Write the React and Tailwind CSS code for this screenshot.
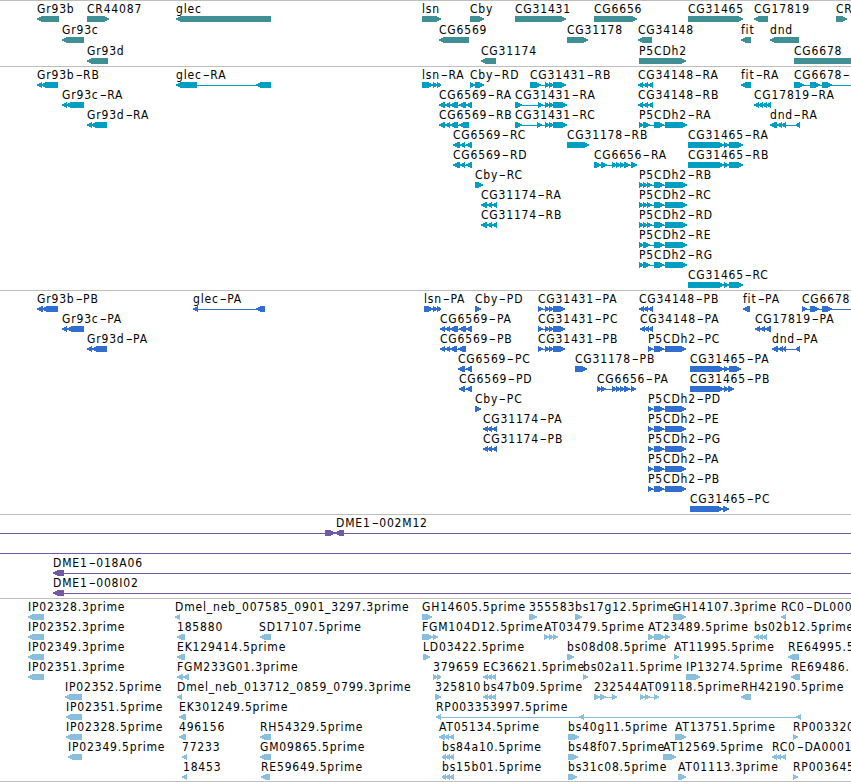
const L = "left";
const R = "right";

// feature: [name, direction, [start, end, start, end, ...], options]
const exons3148 = [638, 643, 643, 648, 648, 653];
const p5Short = [639, 644, 643, 650, 654, 664, 665, 687];
const p5Long = [639, 643, 643, 647, 647, 652, 654, 664, 665, 687];
const p5Protein = [648, 653, 654, 664, 665, 686];
const cg31465 = [688, 724, 724, 729, 729, 743];
const cg31431p = [538, 543, 545, 549, 549, 553, 553, 565];
const cg31174r = [481, 487, 487, 492, 492, 497];
const cg31174p = [483, 488, 488, 492, 492, 497];

const genes = [
    [
        ["Gr93b", L, [37, 59]],
        ["CR44087", R, [87, 109]],
        ["glec", L, [176, 271]],
        ["lsn", R, [422, 441]],
        ["Cby", R, [470, 484]],
        ["CG31431", R, [515, 566]],
        ["CG6656", R, [594, 637]],
        ["CG31465", R, [688, 743]],
        ["CG17819", L, [754, 768]],
        ["CR", R, [836, 847]],
    ],
    [
        ["Gr93c", L, [62, 84]],
        ["CG6569", L, [439, 469]],
        ["CG31178", R, [567, 588]],
        ["CG34148", L, [638, 652]],
        ["fit", L, [741, 751]],
        ["dnd", L, [770, 799]],
    ],
    [
        ["Gr93d", L, [87, 108]],
        ["CG31174", L, [481, 496]],
        ["P5CDh2", R, [639, 686]],
        ["CG6678", R, [794, 870]],
    ],
];

const transcripts = [
    [
        ["Gr93b-RB", L, [37, 42, 41, 58]],
        ["glec-RA", L, [176, 197, 256, 271]],
        ["lsn-RA", R, [422, 433, 433, 437, 437, 441]],
        ["Cby-RD", R, [470, 475, 475, 484]],
        ["CG31431-RB", R, [530, 541, 545, 549, 549, 553, 553, 566]],
        ["CG34148-RA", L, exons3148],
        ["fit-RA", L, [741, 751]],
        ["CG6678-", R, [794, 804, 810, 820, 822, 832], { line: [794, 851] }],
    ],
    [
        ["Gr93c-RA", L, [62, 67, 66, 84]],
        ["CG6569-RA", L, [439, 445, 445, 450, 450, 458, 459, 466, 466, 472]],
        ["CG31431-RA", R, [515, 522, 538, 543, 545, 549, 549, 553, 553, 567]],
        ["CG34148-RB", L, exons3148],
        ["CG17819-RA", L, [754, 759, 759, 763, 763, 767, 766, 771]],
    ],
    [
        ["Gr93d-RA", L, [87, 92, 91, 107]],
        ["CG6569-RB", L, [439, 445, 445, 450, 450, 458, 459, 469]],
        ["CG31431-RC", R, [515, 522, 537, 542, 545, 549, 549, 553, 553, 567]],
        ["P5CDh2-RA", R, p5Short],
        ["dnd-RA", L, [770, 777, 777, 782, 782, 786, 796, 800]],
    ],
    [
        ["CG6569-RC", L, [453, 460, 460, 465, 466, 472]],
        ["CG31178-RB", R, [567, 589]],
        ["CG31465-RA", R, cg31465],
    ],
    [
        ["CG6569-RD", L, [453, 460, 460, 465, 466, 472]],
        ["CG6656-RA", R, [594, 601, 601, 607, 612, 616, 616, 620, 620, 624, 624, 630, 631, 637]],
        ["CG31465-RB", R, cg31465],
    ],
    [["Cby-RC", R, [475, 483]], ["P5CDh2-RB", R, p5Long]],
    [["CG31174-RA", L, cg31174r], ["P5CDh2-RC", R, p5Long]],
    [["CG31174-RB", L, cg31174r], ["P5CDh2-RD", R, p5Long]],
    [["P5CDh2-RE", R, p5Short]],
    [["P5CDh2-RG", R, p5Short]],
    [["CG31465-RC", R, cg31465]],
];

const proteins = [
    [
        ["Gr93b-PB", L, [37, 43, 42, 58]],
        ["glec-PA", L, [193, 198, 256, 265]],
        ["lsn-PA", R, [424, 433, 433, 437, 437, 441]],
        ["Cby-PD", R, [475, 481]],
        ["CG31431-PA", R, cg31431p],
        ["CG34148-PB", L, [639, 644, 644, 648, 648, 653]],
        ["fit-PA", L, [743, 750]],
        ["CG6678", R, [802, 807, 810, 819, 822, 832], { line: [802, 851] }],
    ],
    [
        ["Gr93c-PA", L, [62, 67, 67, 84]],
        ["CG6569-PA", L, [440, 445, 445, 450, 450, 458, 459, 466, 466, 472]],
        ["CG31431-PC", R, cg31431p],
        ["CG34148-PA", L, [640, 645, 645, 649, 649, 653]],
        ["CG17819-PA", L, [755, 760, 760, 765, 765, 771]],
    ],
    [
        ["Gr93d-PA", L, [87, 92, 92, 107]],
        ["CG6569-PB", L, [440, 445, 445, 450, 450, 457, 458, 466]],
        ["CG31431-PB", R, cg31431p],
        ["P5CDh2-PC", R, p5Protein],
        ["dnd-PA", L, [772, 778, 778, 783, 783, 786, 796, 800]],
    ],
    [
        ["CG6569-PC", L, [458, 465, 466, 472]],
        ["CG31178-PB", R, [575, 587]],
        ["CG31465-PA", R, [690, 724, 724, 729, 729, 741]],
    ],
    [
        ["CG6569-PD", L, [459, 465, 466, 472]],
        ["CG6656-PA", R, [597, 601, 601, 606, 612, 616, 616, 620, 620, 624, 624, 630, 631, 636]],
        ["CG31465-PB", R, [690, 724, 724, 728, 728, 734]],
    ],
    [["Cby-PC", R, [475, 481]], ["P5CDh2-PD", R, p5Protein]],
    [["CG31174-PA", L, cg31174p], ["P5CDh2-PE", R, p5Protein]],
    [["CG31174-PB", L, cg31174p], ["P5CDh2-PG", R, p5Protein]],
    [["P5CDh2-PA", R, p5Protein]],
    [["P5CDh2-PB", R, p5Protein]],
    [["CG31465-PC", R, [690, 723, 723, 729]]],
];

const clones = [
    [
        ["", R, [325, 335], { line: [0, 335] }],
        ["DME1-002M12", L, [335, 344], { line: [336, 851], labelX: 336 }],
    ],
    [["", R, [], { line: [0, 851] }]],
    [["DME1-018A06", L, [53, 64], { line: [53, 851] }]],
    [["DME1-008I02", L, [53, 64], { line: [53, 851] }]],
];

const ests = [
    [
        ["IP02328.3prime", L, [28, 44]],
        ["Dmel_neb_007585_0901_3297.3prime", L, [175, 180]],
        ["GH14605.5prime", R, [422, 432]],
        ["355583", R, [529, 537]],
        ["bs17g12.5prime", R, [575, 582]],
        ["GH14107.3prime", R, [673, 686]],
        ["RC0-DL000", L, [781, 786]],
    ],
    [
        ["IP02352.3prime", L, [28, 44]],
        ["185880", L, [177, 185]],
        ["SD17107.5prime", L, [260, 271], { labelX: 259 }],
        ["FGM104D12.5prime", R, [422, 433, 433, 438]],
        ["AT03479.5prime", R, [544, 549, 549, 553, 553, 558]],
        ["AT23489.5prime", R, [648, 654, 654, 665, 665, 670]],
        ["bs02b12.5prime", L, [754, 759, 759, 763, 763, 767]],
    ],
    [
        ["IP02349.3prime", L, [28, 44]],
        ["EK129414.5prime", L, [177, 185]],
        ["LD03422.5prime", R, [423, 430]],
        ["bs08d08.5prime", R, [567, 574]],
        ["AT11995.5prime", R, [674, 679]],
        ["RE64995.5", L, [788, 799]],
    ],
    [
        ["IP02351.3prime", L, [28, 44]],
        ["FGM233G01.3prime", L, [177, 183, 183, 189]],
        ["379659", R, [433, 437, 437, 441]],
        ["EC36621.5prime", L, [483, 488, 488, 492, 492, 496]],
        ["bs02a11.5prime", R, [583, 588]],
        ["IP13274.5prime", R, [686, 700]],
        ["RE69486.", L, [791, 800]],
    ],
    [
        ["IP02352.5prime", L, [65, 82]],
        ["Dmel_neb_013712_0859_0799.3prime", L, [177, 182]],
        ["325810", R, [435, 441]],
        ["bs47b09.5prime", L, [483, 488, 488, 492, 492, 496]],
        ["232544", R, [594, 600, 600, 606, 612, 617]],
        ["AT09118.5prime", R, [640, 645, 645, 650, 654, 659]],
        ["RH42190.5prime", L, [741, 751]],
    ],
    [
        ["IP02351.5prime", L, [66, 82]],
        ["EK301249.5prime", L, [179, 186]],
        ["RP003353997.5prime", L, [436, 441, 579, 584, 796, 801]],
    ],
    [
        ["IP02328.5prime", L, [66, 82]],
        ["496156", L, [179, 186]],
        ["RH54329.5prime", L, [260, 271]],
        ["AT05134.5prime", L, [439, 445, 445, 449, 449, 454]],
        ["bs40g11.5prime", R, [568, 579]],
        ["AT13751.5prime", R, [675, 686]],
        ["RP003320", R, [793, 798]],
    ],
    [
        ["IP02349.5prime", L, [68, 82]],
        ["77233", L, [182, 187]],
        ["GM09865.5prime", L, [260, 271]],
        ["bs84a10.5prime", L, [442, 446, 446, 450, 450, 454]],
        ["bs48f07.5prime", R, [568, 578]],
        ["AT12569.5prime", R, [663, 676]],
        ["RC0-DA0001", L, [772, 777, 777, 781, 781, 786]],
    ],
    [
        ["18453", L, [182, 187], { labelX: 183 }],
        ["RE59649.5prime", L, [261, 270]],
        ["bs15b01.5prime", L, [442, 446, 446, 450, 450, 454]],
        ["bs31c08.5prime", R, [568, 577]],
        ["AT01113.3prime", R, [678, 686]],
        ["RP003645", R, [793, 798]],
    ],
];

function arrowPoints(a, b, dir) {
    const tip = Math.min(5, b - a);
    if (dir === L) {
        return `${a},2.4 ${a + tip},0 ${b},0 ${b},6 ${a + tip},6 ${a},3.8`;
    }
    return `${b},2.4 ${b - tip},0 ${a},0 ${a},6 ${b - tip},6 ${b},3.8`;
}

function Label({ name, x }) {
    return (
        <span className="absolute top-px whitespace-pre" style={{ left: x }}>
            {name.split("-").map((part, i) => (
                <span key={i}>
                    {i > 0 && (
                        <span className="inline-block w-[8.6px] text-center tracking-normal scale-x-[1.8]">-</span>
                    )}
                    {part}
                </span>
            ))}
        </span>
    );
}

function Glyph({ dir, spans, line }) {
    const pairs = [];
    for (let i = 0; i < spans.length; i += 2) {
        pairs.push([spans[i], spans[i + 1]]);
    }
    const [from, to] = line || [spans[0], spans[spans.length - 1]];
    return (
        <g>
            <rect x={from} y="3" width={to - from} height="1" />
            {pairs.map(([a, b]) => (
                <polygon key={a} points={arrowPoints(a, b, dir)} />
            ))}
        </g>
    );
}

function Row({ features, height }) {
    return (
        <div className={`relative ${height}`}>
            {features.map(([name, , spans, opts], i) =>
                name ? <Label key={i} name={name} x={opts?.labelX ?? spans[0]} /> : null
            )}
            <svg
                className="absolute left-0 top-[15px] fill-current"
                width="851"
                height="6"
                shapeRendering="crispEdges"
            >
                {features.map(([, dir, spans, opts], i) => (
                    <Glyph key={i} dir={dir} spans={spans} line={opts?.line} />
                ))}
            </svg>
        </div>
    );
}

function Track({ rows, color, height = "h-5", pad = "pb-[3px]" }) {
    return (
        <section className={`border-t border-[#bebebe] ${pad} ${color}`}>
            {rows.map((features, i) => (
                <Row key={i} features={features} height={height} />
            ))}
        </section>
    );
}

function App() {
    return (
        <main className="w-[851px] h-[782px] overflow-hidden bg-white font-['DejaVu_Sans_Condensed','DejaVu_Sans',sans-serif] text-[12px] leading-[15px] tracking-[0.82px] [&_span]:text-black">
            <Track rows={genes} color="text-[#408f95]" height="h-[21px]" pad="pb-[2px]" />
            <Track rows={transcripts} color="text-[#009fc2]" />
            <Track rows={proteins} color="text-[#306fcf]" />
            <Track rows={clones} color="text-[#7358a6]" />
            <Track rows={ests} color="text-[#88bfdf]" pad="pb-[2px]" />
            <div className="border-t border-[#bebebe]" />
        </main>
    );
}

export default App;
